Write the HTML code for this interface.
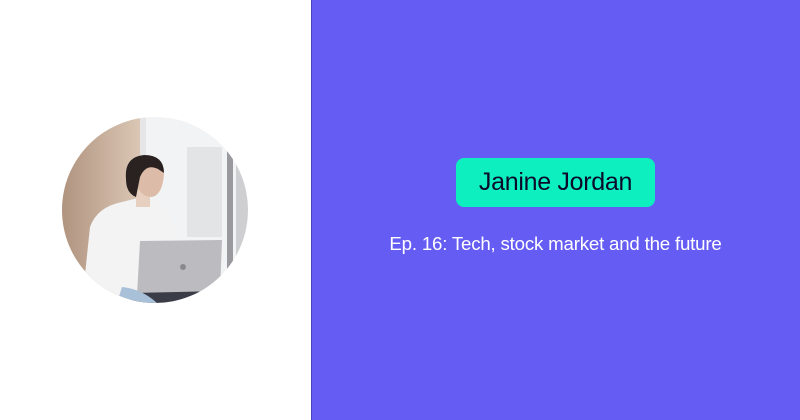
<!DOCTYPE html>
<html><head><style>
html,body{margin:0;padding:0}
body{width:800px;height:420px;position:relative;overflow:hidden;background:#fff;font-family:"Liberation Sans",sans-serif}
.right{position:absolute;left:311px;top:0;width:489px;height:420px;background:#655cf4;border-left:1px solid #4a43c0;box-sizing:border-box}
.pill{position:absolute;left:456px;top:158px;width:199px;height:49px;background:#0eefc0;border-radius:8px;display:flex;align-items:center;justify-content:center;font-size:25px;color:#0a0a2a;letter-spacing:-0.3px}
.sub{position:absolute;left:311px;width:489px;top:233px;text-align:center;color:#fff;font-size:18.7px;letter-spacing:-0.2px}
svg{position:absolute;left:62px;top:117px}
</style></head><body>
<svg width="186" height="186" viewBox="0 0 186 186">
<defs>
<clipPath id="c"><circle cx="93" cy="93" r="93"/></clipPath>
<linearGradient id="w" x1="0" x2="1"><stop offset="0" stop-color="#b09480"/><stop offset="1" stop-color="#dcc8b6"/></linearGradient>
</defs>
<g clip-path="url(#c)">
<rect width="186" height="186" fill="#f2f3f4"/>
<rect width="80" height="186" fill="url(#w)"/>
<rect x="78" y="0" width="6" height="186" fill="#e6e6e8"/>
<rect x="125" y="30" width="35" height="90" fill="#e2e4e6"/>
<rect x="165" y="15" width="6" height="171" fill="#9a9a9e"/>
<rect x="174" y="0" width="12" height="186" fill="#cfcfd2"/>
<path d="M20 186 L28 110 Q35 90 60 85 L80 80 Q100 85 110 100 L120 130 L100 170 L60 186 Z" fill="#f3f3f4"/>
<path d="M74 72 L88 72 L88 90 L74 90 Z" fill="#e8d0c0"/>
<path d="M74 62 Q68 44 82 40 Q100 38 102 58 Q100 78 90 80 Q76 80 74 62 Z" fill="#dcbca8"/>
<path d="M64 62 Q62 40 82 38 Q102 38 102 56 L96 52 Q84 46 78 60 L74 80 Q64 76 64 62 Z" fill="#2a2220"/>
<path d="M78 124 L160 123 L158 176 L75 178 Z" fill="#bcbcc0"/>
<path d="M70 176 L160 174 L162 186 L68 186 Z" fill="#3a3c48"/>
<path d="M60 170 Q80 172 95 186 L55 186 Z" fill="#a8c0d8"/>
<circle cx="121" cy="150" r="3" fill="#8a8a8e"/>
</g>
</svg>
<div class="right"></div>
<div class="pill">Janine Jordan</div>
<div class="sub">Ep. 16: Tech, stock market and the future</div>
</body></html>
